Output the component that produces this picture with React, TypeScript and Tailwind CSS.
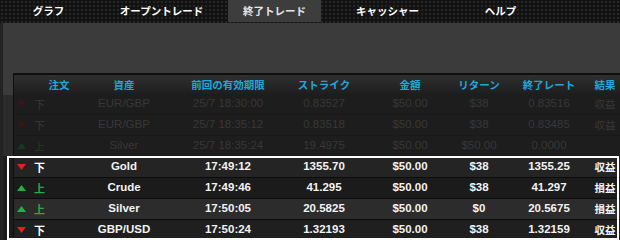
import { clsx } from 'clsx'

type Trade = {
  dir: 'up' | 'down'
  asset: string
  expiry: string
  strike: string
  amount: string
  ret: string
  close: string
  result: string
}

const tabs = ['グラフ', 'オープントレード', '終了トレード', 'キャッシャー', 'ヘルプ']

const headers = ['注文', '資産', '前回の有効期限', 'ストライク', '金額', 'リターン', '終了レート', '結果']

// earlier trades, dimmed behind the tutorial spotlight
const older: Trade[] = [
  { dir: 'down', asset: 'EUR/GBP', expiry: '25/7 18:30:00', strike: '0.83527', amount: '$50.00', ret: '$38', close: '0.83516', result: '収益' },
  { dir: 'down', asset: 'EUR/GBP', expiry: '25/7 18:35:12', strike: '0.83518', amount: '$50.00', ret: '$38', close: '0.83485', result: '収益' },
  { dir: 'up', asset: 'Silver', expiry: '25/7 18:35:24', strike: '19.4975', amount: '$50.00', ret: '$50.00', close: '0.0000', result: '' },
]

const recent: Trade[] = [
  { dir: 'down', asset: 'Gold', expiry: '17:49:12', strike: '1355.70', amount: '$50.00', ret: '$38', close: '1355.25', result: '収益' },
  { dir: 'up', asset: 'Crude', expiry: '17:49:46', strike: '41.295', amount: '$50.00', ret: '$38', close: '41.297', result: '損益' },
  { dir: 'up', asset: 'Silver', expiry: '17:50:05', strike: '20.5825', amount: '$50.00', ret: '$0', close: '20.5675', result: '損益' },
  { dir: 'down', asset: 'GBP/USD', expiry: '17:50:24', strike: '1.32193', amount: '$50.00', ret: '$38', close: '1.32159', result: '収益' },
]

const recentBg = ['bg-[#242424]', 'bg-[#1b1b1b]', 'bg-[#2c2c2c]', 'bg-[#1f1f1f]']

const cols = 'grid grid-cols-[60px_100px_108px_84px_88px_50px_90px_22px]'
const jp = "font-['Noto_Sans_CJK_JP',sans-serif]"

function Arrow({ dir, dim }: { dir: 'up' | 'down'; dim?: boolean }) {
  const fill = dir === 'up' ? (dim ? '#17391c' : '#22b140') : dim ? '#3f1414' : '#e3201b'
  return (
    <svg width="9" height="6" viewBox="0 0 9 6" className="shrink-0">
      {dir === 'up' ? <polygon points="4.5,0 9,6 0,6" fill={fill} /> : <polygon points="0,0 9,0 4.5,6" fill={fill} />}
    </svg>
  )
}

function TradeRow({ t, dim, className }: { t: Trade; dim?: boolean; className?: string }) {
  const cell = 'flex items-center justify-center whitespace-nowrap'
  return (
    <div
      className={clsx(
        cols,
        'h-[21px] border-b text-[11.5px]',
        dim ? 'border-[#191919] bg-[#1d1d1d] text-[#383838]' : 'border-[#0c0c0c] font-bold text-[#f2f2f2]',
        className,
      )}
    >
      <div className="flex items-center gap-[8px] pl-[3px]">
        <Arrow dir={t.dir} dim={dim} />
        <span
          className={clsx(
            jp,
            'text-[11px]',
            t.dir === 'up' ? (dim ? 'text-[#1b3d20]' : 'text-[#2aaa46]') : dim ? 'text-[#383838]' : 'text-white',
          )}
        >
          {t.dir === 'up' ? '上' : '下'}
        </span>
      </div>
      <div className={cell}>{t.asset}</div>
      <div className={cell}>{t.expiry}</div>
      <div className={cell}>{t.strike}</div>
      <div className={cell}>{t.amount}</div>
      <div className={cell}>{t.ret}</div>
      <div className={cell}>{t.close}</div>
      <div className={clsx(cell, jp, 'text-[10.5px]')}>{t.result}</div>
    </div>
  )
}

export default function App() {
  return (
    <div className="relative h-[240px] w-[620px] overflow-hidden bg-[#131313] font-['Liberation_Sans',Arial,sans-serif]">
      <nav className="flex h-[23px] gap-[20px] bg-[#121212] bg-[radial-gradient(#262626_0.8px,transparent_0.8px)] bg-[length:4px_4px] pl-[2px]">
        {tabs.map((t, i) => (
          <div
            key={t}
            className={clsx(
              jp,
              'flex h-[22px] w-[93px] items-center justify-center text-[10.5px] font-bold',
              i === 2 ? 'bg-[#3d3d3d] text-[#e6e6e6]' : 'text-white',
            )}
          >
            {t}
          </div>
        ))}
      </nav>

      <section className="h-[217px] border-l-[3px] border-[#232323] bg-[linear-gradient(to_bottom,#3b3b3b_0,#3b3b3b_72px,#2b2b2b_72px,#2b2b2b_133px,#1c1c1c_133px)] pl-[10px] pt-[50px]">
        <div className="w-[607px] border-t-2 border-l border-[#0f0f0f]">
          <div className={clsx(cols, jp, 'h-[19px] bg-[linear-gradient(to_bottom,#2f2f2f,#1e1e1e)] text-[10.5px] font-bold text-[#1ea7dd]')}>
            {headers.map((h, i) => (
              <div key={h} className={clsx('flex items-center justify-center whitespace-nowrap', i === 0 && 'pl-[30px]')}>
                {h}
              </div>
            ))}
          </div>
          {older.map((t, i) => (
            <TradeRow key={i} t={t} dim />
          ))}
          {recent.map((t, i) => (
            <TradeRow key={i} t={t} className={recentBg[i]} />
          ))}
        </div>
      </section>

      {/* tutorial spotlight around the latest trades */}
      <div className="pointer-events-none absolute left-[7px] top-[156px] h-[84px] w-[612px] border-2 border-white" />
    </div>
  )
}
